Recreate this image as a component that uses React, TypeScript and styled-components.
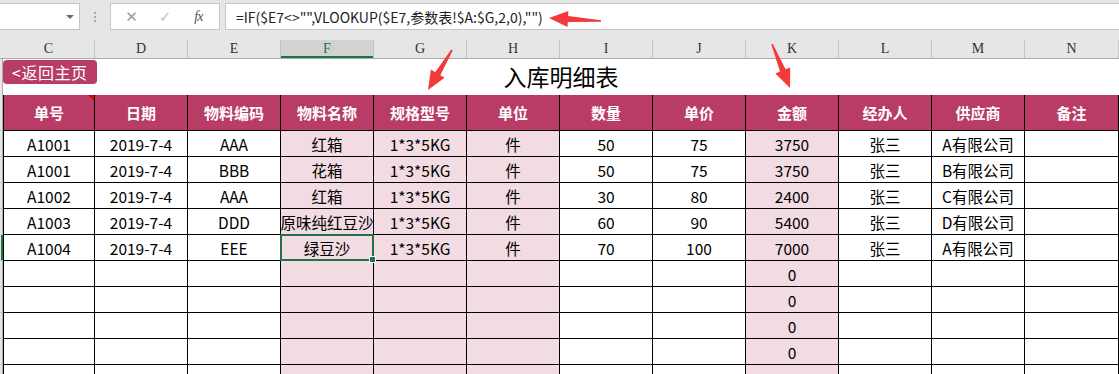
import React from 'react';
import styled, { createGlobalStyle } from 'styled-components';

const GlobalStyle = createGlobalStyle`
  html, body { margin: 0; padding: 0; background: #ffffff; }
  body {
    width: 1119px;
    height: 374px;
    overflow: hidden;
    position: relative;
    font-family: "Noto Sans CJK SC", "Noto Sans", sans-serif;
  }
`;

const COLS = '3px 92px repeat(10, 93px) 94px';
const GREEN = '#217346';
const HEADER_BG = '#b93c66';
const PINK = '#f2dbe3';

/* ---------- formula bar ---------- */

const FormulaBar = styled.div`
  height: 40px;
  background: #e6e6e6;
  display: flex;
  align-items: flex-start;
  padding-top: 3px;
  box-sizing: border-box;
`;

const NameBox = styled.div`
  width: 81px;
  height: 27px;
  margin-left: -1px;
  background: #fff;
  border: 1px solid #c6c6c6;
  box-sizing: border-box;
  position: relative;
  display: flex;
  align-items: center;
  justify-content: flex-end;
  padding-right: 5px;
`;

const DropCaret = styled.span`
  width: 0;
  height: 0;
  border-left: 4px solid transparent;
  border-right: 4px solid transparent;
  border-top: 4px solid #6a6a6a;
`;

const Grip = styled.div`
  width: 30px;
  height: 27px;
  display: flex;
  flex-direction: column;
  align-items: center;
  justify-content: center;
  gap: 2px;
`;

const GripDot = styled.span`
  width: 2px;
  height: 2px;
  background: #a8a8a8;
`;

const ActionBox = styled.div`
  width: 110px;
  height: 27px;
  background: #fff;
  border: 1px solid #c6c6c6;
  box-sizing: border-box;
  display: flex;
  align-items: center;
  justify-content: space-around;
  padding: 0 4px;
`;

const ActionIcon = styled.span<{ $tone: string }>`
  color: ${p => p.$tone};
  font-size: 15px;
  font-family: "DejaVu Sans", sans-serif;
  width: 26px;
  text-align: center;
`;

const FxIcon = styled.span`
  color: #555;
  font-family: "Liberation Serif", serif;
  font-style: italic;
  font-size: 14px;
  width: 26px;
  text-align: center;
  letter-spacing: -1px;
`;

const FormulaInput = styled.div`
  flex: 1;
  height: 27px;
  margin-left: 5px;
  background: #fff;
  border: 1px solid #c6c6c6;
  border-right: none;
  box-sizing: border-box;
  display: flex;
  align-items: center;
  padding-left: 10px;
  font-size: 14px;
  color: #222;
  white-space: nowrap;
`;

/* ---------- column letters ---------- */

const ColumnHeads = styled.div`
  display: grid;
  grid-template-columns: ${COLS};
  height: 18px;
  background: #e6e6e6;
  border-bottom: 1px solid #ababab;
  box-sizing: content-box;
`;

const ColumnHead = styled.div<{ $selected?: boolean }>`
  display: flex;
  align-items: center;
  justify-content: center;
  border-right: 1px solid #c4c4c4;
  font-family: "Liberation Serif", serif;
  font-size: 14px;
  color: ${p => (p.$selected ? GREEN : '#333')};
  background: ${p => (p.$selected ? '#d2d2d2' : 'transparent')};
  box-shadow: ${p => (p.$selected ? `inset 0 -2px 0 ${GREEN}` : 'none')};
`;

/* ---------- sheet ---------- */

const Sheet = styled.div`
  display: flex;
  flex-direction: column;
`;

const Row = styled.div<{ $h: number }>`
  display: grid;
  grid-template-columns: ${COLS};
  height: ${p => p.$h}px;
`;

const RowStub = styled.div<{ $active?: boolean }>`
  background: #e6e6e6;
  border-bottom: 1px solid #c4c4c4;
  box-shadow: inset ${p => (p.$active ? `-2px 0 0 ${GREEN}` : '-1px 0 0 #ababab')};
`;

const TitleCell = styled.div`
  grid-column: 2 / -1;
  position: relative;
  display: flex;
  align-items: center;
  justify-content: center;
  font-size: 23px;
  color: #000;
  border-bottom: 1px solid #000;
  padding-bottom: 2px;
  box-sizing: border-box;
`;

const BackButton = styled.div`
  position: absolute;
  left: 0;
  top: 1px;
  width: 94px;
  height: 24px;
  background: ${HEADER_BG};
  border-radius: 4px;
  color: #fff;
  font-size: 16px;
  display: flex;
  align-items: center;
  padding-left: 9px;
  box-sizing: border-box;
  letter-spacing: 0.5px;
`;

const HeadCell = styled.div<{ $first?: boolean }>`
  position: relative;
  background: ${HEADER_BG};
  color: #fff;
  font-weight: 700;
  font-size: 15px;
  display: flex;
  align-items: center;
  justify-content: center;
  border-right: 1px solid #000;
  border-bottom: 1px solid #000;
  border-left: ${p => (p.$first ? '1px solid #000' : 'none')};
`;

const CommentMark = styled.span`
  position: absolute;
  top: 0;
  right: 0;
  width: 0;
  height: 0;
  border-left: 6px solid transparent;
  border-top: 6px solid #e00000;
`;

const Cell = styled.div<{ $pink?: boolean; $first?: boolean; $active?: boolean }>`
  position: relative;
  background: ${p => (p.$pink ? PINK : '#fff')};
  color: #000;
  font-size: 15.5px;
  display: flex;
  align-items: center;
  justify-content: center;
  white-space: nowrap;
  overflow: ${p => (p.$active ? 'visible' : 'hidden')};
  border-right: 1px solid #000;
  border-bottom: 1px solid #000;
  border-left: ${p => (p.$first ? '1px solid #000' : 'none')};
  z-index: ${p => (p.$active ? 2 : 'auto')};
`;

const Selection = styled.span`
  position: absolute;
  left: -1px;
  top: -1px;
  right: -1px;
  bottom: -1px;
  border: 2px solid ${GREEN};
  pointer-events: none;
`;

const FillHandle = styled.span`
  position: absolute;
  right: -4px;
  bottom: -4px;
  width: 5px;
  height: 5px;
  background: ${GREEN};
  border: 1px solid #fff;
`;

const Callouts = styled.svg`
  position: absolute;
  left: 0;
  top: 0;
  pointer-events: none;
  z-index: 5;
`;

/* ---------- data ---------- */

const LETTERS = ['C', 'D', 'E', 'F', 'G', 'H', 'I', 'J', 'K', 'L', 'M', 'N'];
const HEADERS = ['单号', '日期', '物料编码', '物料名称', '规格型号', '单位', '数量', '单价', '金额', '经办人', '供应商', '备注'];
const PINK_COLS = new Set([3, 4, 5, 8]);

const RECORDS: string[][] = [
  ['A1001', '2019-7-4', 'AAA', '红箱', '1*3*5KG', '件', '50', '75', '3750', '张三', 'A有限公司', ''],
  ['A1001', '2019-7-4', 'BBB', '花箱', '1*3*5KG', '件', '50', '75', '3750', '张三', 'B有限公司', ''],
  ['A1002', '2019-7-4', 'AAA', '红箱', '1*3*5KG', '件', '30', '80', '2400', '张三', 'C有限公司', ''],
  ['A1003', '2019-7-4', 'DDD', '原味纯红豆沙', '1*3*5KG', '件', '60', '90', '5400', '张三', 'D有限公司', ''],
  ['A1004', '2019-7-4', 'EEE', '绿豆沙', '1*3*5KG', '件', '70', '100', '7000', '张三', 'A有限公司', ''],
];
const BLANK = ['', '', '', '', '', '', '', '', '0', '', '', ''];
const ROWS = [...RECORDS, BLANK, BLANK, BLANK, BLANK, BLANK];
const ACTIVE = { row: 4, col: 3 };

type Pt = [number, number];

// tapered arrow: thin tail widening toward a triangular head
function arrowPoints(tail: Pt, tip: Pt, headLen: number, headHalf: number, tailW: number, neckW: number) {
  const dx = tip[0] - tail[0];
  const dy = tip[1] - tail[1];
  const len = Math.hypot(dx, dy);
  const ux = dx / len;
  const uy = dy / len;
  const nx = -uy;
  const ny = ux;
  const bx = tip[0] - ux * headLen;
  const by = tip[1] - uy * headLen;
  const pts: Pt[] = [
    [tail[0] + nx * tailW, tail[1] + ny * tailW],
    [bx + nx * neckW, by + ny * neckW],
    [bx + nx * headHalf, by + ny * headHalf],
    tip,
    [bx - nx * headHalf, by - ny * headHalf],
    [bx - nx * neckW, by - ny * neckW],
    [tail[0] - nx * tailW, tail[1] - ny * tailW],
  ];
  return pts.map(p => `${p[0].toFixed(1)},${p[1].toFixed(1)}`).join(' ');
}

const ARROWS: { tail: Pt; tip: Pt }[] = [
  { tail: [601, 21], tip: [549, 18] },
  { tail: [452, 50], tip: [428, 90] },
  { tail: [772, 44], tip: [790, 88] },
];

export default function App() {
  return (
    <>
      <GlobalStyle />
      <FormulaBar>
        <NameBox>
          <DropCaret />
        </NameBox>
        <Grip>
          <GripDot />
          <GripDot />
          <GripDot />
        </Grip>
        <ActionBox>
          <ActionIcon $tone="#9a9a9a">✕</ActionIcon>
          <ActionIcon $tone="#c2c2c2">✓</ActionIcon>
          <FxIcon>fx</FxIcon>
        </ActionBox>
        <FormulaInput>=IF($E7&lt;&gt;"",VLOOKUP($E7,参数表!$A:$G,2,0),"")</FormulaInput>
      </FormulaBar>

      <ColumnHeads>
        <div />
        {LETTERS.map((l, i) => (
          <ColumnHead key={l} $selected={i === ACTIVE.col}>
            {l}
          </ColumnHead>
        ))}
      </ColumnHeads>

      <Sheet>
        <Row $h={36}>
          <RowStub />
          <TitleCell>
            <BackButton>&lt;返回主页</BackButton>
            入库明细表
          </TitleCell>
        </Row>

        <Row $h={36}>
          <RowStub />
          {HEADERS.map((h, i) => (
            <HeadCell key={h} $first={i === 0}>
              {h}
              {i === 0 && <CommentMark />}
            </HeadCell>
          ))}
        </Row>

        {ROWS.map((r, ri) => (
          <Row key={ri} $h={26}>
            <RowStub $active={ri === ACTIVE.row} />
            {r.map((v, ci) => {
              const active = ri === ACTIVE.row && ci === ACTIVE.col;
              return (
                <Cell key={ci} $pink={PINK_COLS.has(ci)} $first={ci === 0} $active={active}>
                  {v}
                  {active && (
                    <Selection>
                      <FillHandle />
                    </Selection>
                  )}
                </Cell>
              );
            })}
          </Row>
        ))}
      </Sheet>

      <Callouts width={1119} height={374} viewBox="0 0 1119 374">
        {ARROWS.map((a, i) => (
          <polygon key={i} points={arrowPoints(a.tail, a.tip, 19, 8, 0.8, 3)} fill="#f23a3a" />
        ))}
      </Callouts>
    </>
  );
}
